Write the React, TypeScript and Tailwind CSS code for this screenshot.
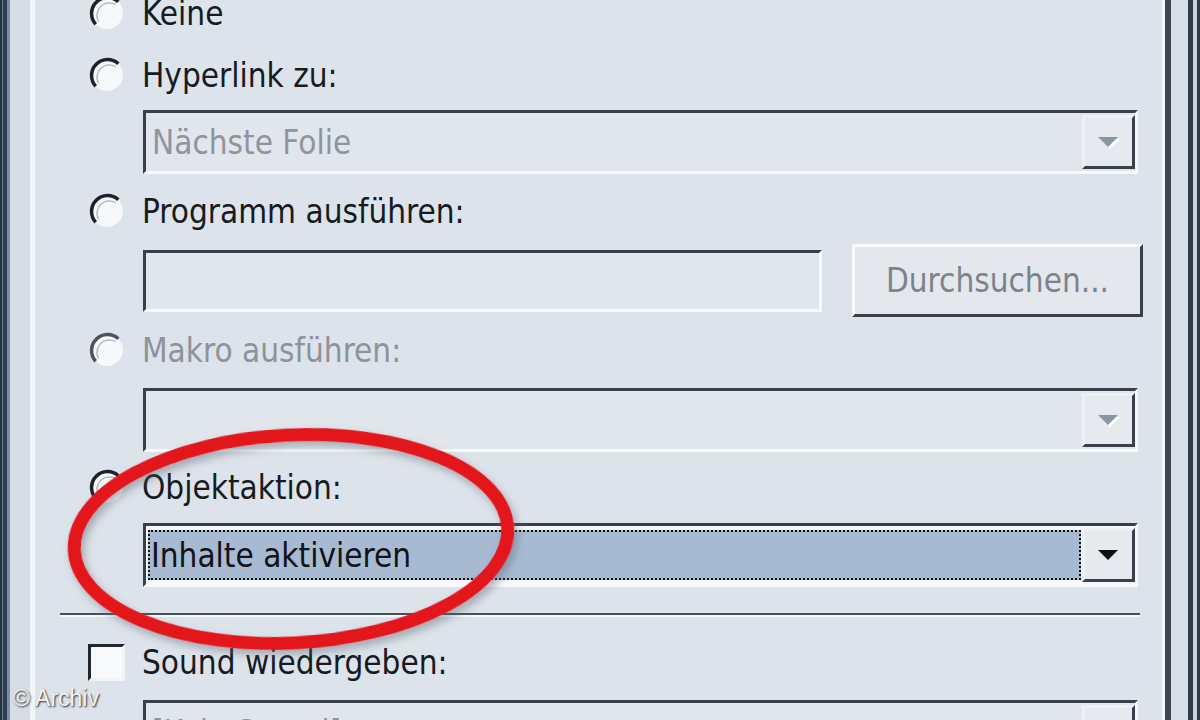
import React from "react";

function Radio({ muted = false }: { muted?: boolean }) {
  return (
    <svg width="38" height="38" viewBox="0 0 38 38" className="shrink-0">
      <circle cx="19" cy="19" r="16" fill="#f6f8fa" />
      <path
        d="M7.7 30.3 A16 16 0 0 1 30.3 7.7"
        fill="none"
        stroke={muted ? "#4c535c" : "#1d2229"}
        strokeWidth="3.5"
      />
      <path d="M10.5 27.5 A12.5 12.5 0 0 1 27.5 10.5" fill="none" stroke="#b3bac3" strokeWidth="1.5" />
    </svg>
  );
}

function Arrow({ muted = false }: { muted?: boolean }) {
  return (
    <svg width="26" height="16" viewBox="0 0 26 16">
      {muted && <polygon points="4,5 24,5 14,15" fill="#ffffff" />}
      <polygon points="2,3 22,3 12,13" fill={muted ? "#8995a3" : "#0d0f12"} />
    </svg>
  );
}

function Row({ children, className = "" }: { children: React.ReactNode; className?: string }) {
  return <div className={`flex h-[62px] items-center pl-[53px] ${className}`}>{children}</div>;
}

function Select({
  text,
  active = false,
  className = "",
}: {
  text?: string;
  active?: boolean;
  className?: string;
}) {
  return (
    <div
      className={`ml-[108px] mr-[24px] flex h-[64px] border-[3px] border-t-[#38414b] border-l-[#38414b] border-b-[#f7f9fb] border-r-[#f7f9fb] ${
        active ? "bg-[#f5f7fa]" : "bg-[#e1e6ec]"
      } ${className}`}
    >
      {active ? (
        <div className="flex flex-1 py-[4px] pl-[2px] pr-[1px]">
          <div className="flex flex-1 items-center border-2 border-dotted border-[#121417] bg-[#a7bad2] pl-[1px] text-[#101317]">
            {text}
          </div>
        </div>
      ) : (
        <div className="flex flex-1 items-center pl-[6px] text-[#8e959d]">{text}</div>
      )}
      <div className="my-[2px] flex w-[53px] items-center justify-center border-[3px] border-t-[#eef1f4] border-l-[#eef1f4] border-b-[#38414b] border-r-[#38414b] bg-[#e6eaee]">
        <Arrow muted={!active} />
      </div>
    </div>
  );
}

export default function App() {
  return (
    <div className="relative flex h-[720px] w-[1200px] overflow-hidden bg-[#dde3ea] font-['DejaVu_Sans_Condensed','DejaVu_Sans',sans-serif]">
      {/* left window frame */}
      <div className="flex h-full shrink-0">
        <div className="w-[2px] bg-[#25303d]" />
        <div className="w-[1px] bg-[#6b7a8c]" />
        <div className="w-[4px] bg-[#2d3c52]" />
        <div className="w-[3px] bg-[#7d8ca0]" />
        <div className="w-[20px] bg-[#d5dde7]" />
        <div className="w-[5px] bg-[#f3f6f9]" />
      </div>

      {/* dialog content */}
      <div className="flex-1 text-[33px] leading-none text-[#161b21]">
        <Row className="-mt-[18px]">
          <Radio />
          <span className="ml-[16px]">Keine</span>
        </Row>
        <Row>
          <Radio />
          <span className="ml-[16px]">Hyperlink zu:</span>
        </Row>
        <Select text="Nächste Folie" className="mt-[4px]" />

        <Row className="mt-[6px]">
          <Radio />
          <span className="ml-[16px]">Programm ausführen:</span>
        </Row>
        <div className="ml-[108px] mr-[19px] mt-[2px] flex h-[73px] items-center gap-[30px]">
          <div className="h-[62px] w-[679px] border-[3px] border-t-[#38414b] border-l-[#38414b] border-b-[#f7f9fb] border-r-[#f7f9fb] bg-[#e1e6ec]" />
          <div className="flex h-[73px] flex-1 items-center justify-center border-[3px] border-t-[#f9fbfc] border-l-[#f9fbfc] border-b-[#3a4047] border-r-[#3a4047] bg-[#e4e8ed] text-[#7b838c]">
            Durchsuchen...
          </div>
        </div>

        <Row className="mt-[2px]">
          <Radio muted />
          <span className="ml-[16px] text-[#8c939b]">Makro ausführen:</span>
        </Row>
        <Select className="mt-[7px]" />

        <Row className="mt-[4px]">
          <Radio />
          <span className="ml-[16px]">Objektaktion:</span>
        </Row>
        <Select text="Inhalte aktivieren" active className="mt-[5px]" />

        <div className="ml-[25px] mr-[22px] mt-[26px] h-[4px] border-t-2 border-b-2 border-t-[#46505b] border-b-[#f7f9fb]" />

        <div className="mt-[14px] flex h-[62px] items-center pl-[53px]">
          <div className="h-[37px] w-[37px] shrink-0 border-[3px] border-t-[#22272e] border-l-[#22272e] border-b-[#f1f4f7] border-r-[#f1f4f7] bg-[#f7f9fb]" />
          <span className="ml-[17px]">Sound wiedergeben:</span>
        </div>
        <Select text="[Kein Sound]" className="mt-[7px]" />
      </div>

      {/* right window frame */}
      <div className="flex h-full shrink-0">
        <div className="w-[3px] bg-[#f4f7fa]" />
        <div className="w-[6px] bg-[#3d4651]" />
        <div className="w-[17px] bg-[#d7dee7]" />
        <div className="w-[5px] bg-[#2e3a4a]" />
        <div className="w-[4px] bg-[#c9d2dd]" />
        <div className="w-[3px] bg-[#2e3a4a]" />
      </div>

      {/* red marker ellipse */}
      <svg className="pointer-events-none absolute left-0 top-0" width="1200" height="720" viewBox="0 0 1200 720">
        <defs>
          <filter id="shadow" x="-20%" y="-20%" width="140%" height="140%">
            <feDropShadow dx="3" dy="5" stdDeviation="4" floodColor="#5a6470" floodOpacity="0.45" />
          </filter>
        </defs>
        <ellipse
          cx="291"
          cy="539"
          rx="217"
          ry="104"
          transform="rotate(-3 291 539)"
          fill="none"
          stroke="#e3131d"
          strokeWidth="13"
          filter="url(#shadow)"
        />
      </svg>

      <div className="absolute bottom-[10px] left-[13px] font-['Liberation_Sans',Arial,sans-serif] text-[23px] leading-none text-[#f3f3f3] [text-shadow:1px_1px_2px_rgba(0,0,0,0.85)]">
        © Archiv
      </div>
    </div>
  );
}
